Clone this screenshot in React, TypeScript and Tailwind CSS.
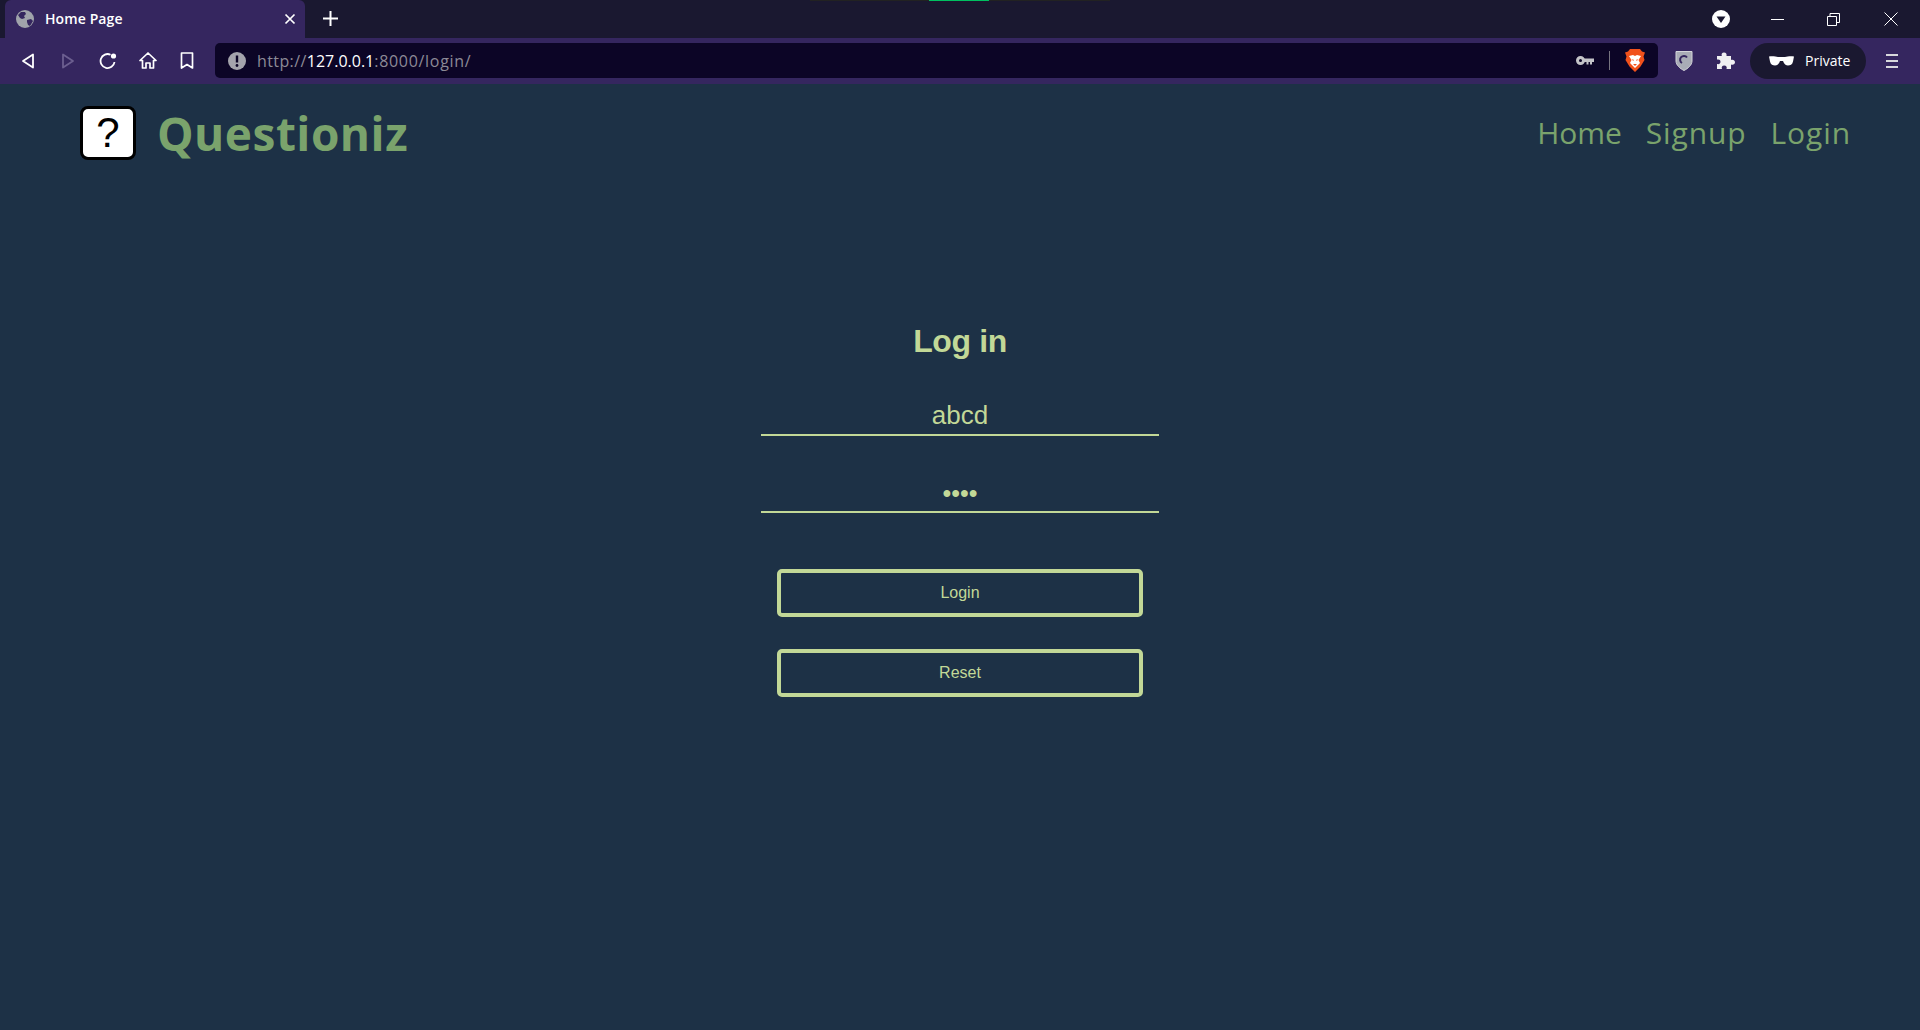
import React from 'react';

const sans = 'font-["Liberation_Sans",Arial,sans-serif]';
const ui = 'font-["Open_Sans","Noto_Sans",sans-serif]';

function TabBar() {
    return (
        <div className="relative flex h-[38px] shrink-0 items-end bg-[#1a1830] pl-[5px]">
            {/* Strip at the very top of the window */}
            <div className="absolute left-[810px] top-0 h-px w-[300px] bg-[#222222]"></div>
            <div className="absolute left-[929px] top-0 h-px w-[60px] bg-[#00c060]"></div>

            <div className="flex h-[38px] w-[300px] items-center rounded-t-[6px] bg-[#35265f] pl-[11px] pr-[8px]">
                <svg width="18" height="18" viewBox="0 0 18 18" className="shrink-0">
                    <circle cx="9" cy="9" r="9" fill="#a0a3ab" />
                    <path d="M2 5l3-3 4 0 1 2-2 2 1 2-3 1-2-1zM11 10l4-1 2 2-3 5-2-1-1-3z" fill="#35265f" />
                </svg>
                <span className={`ml-[11px] flex-1 text-[14px] font-semibold leading-none tracking-[0.1px] text-white ${ui}`}>Home Page</span>
                <svg width="12" height="12" viewBox="0 0 12 12" className="shrink-0 mr-[1px]">
                    <path d="M1.5 1.5l9 9M10.5 1.5l-9 9" stroke="#fff" strokeWidth="1.7" />
                </svg>
            </div>
            <div className="flex h-[38px] w-[50px] items-center justify-center pb-[1px]">
                <svg width="15" height="15" viewBox="0 0 15 15">
                    <path d="M7.5 0v15M0 7.5h15" stroke="#fff" strokeWidth="2" />
                </svg>
            </div>

            <div className="ml-auto flex h-[38px] items-center">
                <svg width="18" height="18" viewBox="0 0 18 18" className="mr-[41px]">
                    <circle cx="9" cy="9" r="9" fill="#fff" />
                    <path d="M4.5 6.5h9L9 13z" fill="#1a1830" />
                </svg>
                <div className="mr-[43px] h-px w-[13px] bg-white"></div>
                <svg width="13" height="13" viewBox="0 0 13 13" className="mr-[44px]">
                    <path d="M0.5 3.5h9v9h-9zM3 3.5V0.5h9.5v9h-3" fill="none" stroke="#fff" strokeWidth="1" />
                </svg>
                <svg width="14" height="14" viewBox="0 0 14 14" className="mr-[22px]">
                    <path d="M0.5 0.5l13 13M13.5 0.5l-13 13" stroke="#fff" strokeWidth="1" />
                </svg>
            </div>
        </div>
    );
}

function NavIcons() {
    return (
        <div className="flex w-[215px] shrink-0 items-center pl-[21px]">
            <svg width="14" height="16" viewBox="0 0 14 16" className="mr-[26px]">
                <path d="M12 1.5v13L2 8z" fill="none" stroke="#fff" strokeWidth="1.8" strokeLinejoin="round" />
            </svg>
            <svg width="14" height="16" viewBox="0 0 14 16" className="mr-[24px]">
                <path d="M2 1.5v13L12 8z" fill="none" stroke="#6c5f90" strokeWidth="1.8" strokeLinejoin="round" />
            </svg>
            <svg width="18" height="18" viewBox="0 0 18 18" className="mr-[22px]">
                <path d="M15.5 10A7 7 0 1 1 11.5 2.7" fill="none" stroke="#fff" strokeWidth="1.8" />
                <circle cx="14.5" cy="4" r="2.6" fill="#fff" />
            </svg>
            <svg width="18" height="17" viewBox="0 0 18 17" className="mr-[23px]">
                <path d="M1 8.5L9 1l8 7.5h-2.5V16h-3.5v-5H7v5H3.500V8.500z" fill="none" stroke="#fff" strokeWidth="1.7" strokeLinejoin="round" />
            </svg>
            <svg width="14" height="17" viewBox="0 0 14 17">
                <path d="M1.500 1h11v15L7 12.500 1.500 16z" fill="none" stroke="#fff" strokeWidth="1.7" strokeLinejoin="round" />
            </svg>
        </div>
    );
}

function AddressBar() {
    return (
        <div className="flex h-[35px] w-[1443px] shrink-0 items-center rounded-[5px] bg-[#0c0526] pl-[13px] pr-[13px]">
            <svg width="18" height="18" viewBox="0 0 18 18" className="shrink-0">
                <circle cx="9" cy="9" r="9" fill="#a4a4ac" />
                <path d="M9 3.500v7" stroke="#0c0526" strokeWidth="2.400" />
                <circle cx="9" cy="13.500" r="1.400" fill="#0c0526" />
            </svg>
            <span className={`ml-[11px] flex-1 text-[16px] leading-none tracking-[0.4px] text-[#8c8a96] ${ui}`}>
                http://<span className="text-white tracking-[0px]">127.0.0.1</span><span className="tracking-[0.7px]">:8000/login/</span>
            </span>
            <svg width="18" height="11" viewBox="0 0 18 11" className="shrink-0">
                <circle cx="4.500" cy="5.500" r="3" fill="none" stroke="#c4c4c8" strokeWidth="3" />
                <path d="M8 3.500h10v3.500h-2v2.500h-2V7h-1.500v2.500h-2V7H8z" fill="#c4c4c8" />
            </svg>
            <div className="ml-[15px] h-[19px] w-px bg-[#77747f]"></div>
            <svg width="20" height="23" viewBox="0 0 20 23" className="ml-[15px] shrink-0">
                <path d="M5 0h10l2 2.500 3 1-1.500 4 1 3.500-4 6.500-5.500 5.500-5.500-5.500-4-6.500 1-3.500L0 3.500l3-1z" fill="#f1511b" />
                <path d="M4 7l4-1 2 1 2-1 4 1-2.500 4 1.500 3-5 5-5-5 1.500-3z" fill="#fff" />
                <path d="M7 10l2 1-1 1zM13 10l-2 1 1 1zM8 15h4l-2 2z" fill="#f1511b" />
            </svg>
        </div>
    );
}

function ToolbarRight() {
    return (
        <div className="flex flex-1 items-center pl-[17px]">
            <svg width="18" height="21" viewBox="0 0 18 21" className="shrink-0">
                <path d="M1 1.500h16V11c0 4-4 7.500-8 9.500C5 18.500 1 15 1 11z" fill="#a9acb6" stroke="#d4d5da" strokeWidth="1" />
                <path d="M12 7.500A3.800 3.800 0 1 0 7 13" fill="none" stroke="#35265f" strokeWidth="2" />
            </svg>
            <svg width="18" height="18" viewBox="0 0 18 18" className="ml-[24px] shrink-0">
                <path d="M7 0.500c2 0 3 1.500 2.500 3.500H14v4c2-.8 4 .3 4 2.300s-2 3-4 2.200V17H9.500c.8-2-.3-3.500-2.300-3.500S4.200 15 5 17H0v-5c2 .6 3.500-.5 3.500-2.300S2 7 0 7.600V4h4.800C4.200 2 5 .5 7 .5z" fill="#f0f0f2" />
            </svg>
            <div className="ml-[15px] flex h-[36px] w-[116px] shrink-0 items-center rounded-full bg-[#1a1830] pl-[19px]">
                <svg width="25" height="10" viewBox="0 0 25 10" className="shrink-0">
                    <path d="M0 0.500c4-.6 7 .2 9 .5h7c2-.3 5-1.100 9-.5l-1 5c-.5 3-3 4-5 4s-4-1.500-5-4.500h-3c-1 3-3 4.500-5 4.500s-4.500-1-5-4z" fill="#fff" />
                </svg>
                <span className={`ml-[11px] text-[14px] leading-none text-white ${ui}`}>Private</span>
            </div>
            <div className="ml-[20px] flex w-[12px] shrink-0 flex-col gap-[4px]">
                <div className="h-[2px] bg-[#d8d8dc]"></div>
                <div className="h-[2px] bg-[#d8d8dc]"></div>
                <div className="h-[2px] bg-[#d8d8dc]"></div>
            </div>
        </div>
    );
}

function Header() {
    return (
        <header className="flex items-center justify-between pl-[80px] pr-[69px] pt-[22px]">
            <div className="flex items-center">
                <div className={`flex h-[54px] w-[56px] items-center justify-center rounded-[8px] border-[3px] border-black bg-white text-[42px] leading-none text-black ${sans}`}>?</div>
                <span className={`ml-[21px] text-[46px] font-bold leading-none tracking-[0.5px] text-[#7aa36c] ${ui}`}>Questioniz</span>
            </div>
            <nav className={`flex gap-[24px] text-[30px] font-medium leading-none tracking-[0.9px] text-[#7aa36c] ${ui}`}>
                <a className="tracking-[-0.1px]">Home</a>
                <a>Signup</a>
                <a>Login</a>
            </nav>
        </header>
    );
}

function LoginForm() {
    return (
        <form className={`mx-auto mt-[165px] flex w-[398px] flex-col items-center text-[#c2d897] ${sans}`}>
            <h1 className="text-[32px] font-bold leading-none tracking-[-0.4px]">Log in</h1>
            <input
                defaultValue="abcd"
                className="mt-[43px] h-[36px] w-full border-b-2 border-[#c2d897] bg-transparent pb-[3px] text-center text-[26px] leading-none outline-none"
            />
            <input
                type="password"
                defaultValue="abcd"
                className="mt-[41px] h-[36px] w-full border-b-2 border-[#c2d897] bg-transparent pb-[2px] text-center text-[25px] leading-none outline-none"
            />
            <button type="button" className="mt-[56px] h-[48px] w-[366px] rounded-[5px] border-[4px] border-[#c2d897] text-[16px]">Login</button>
            <button type="reset" className="mt-[32px] h-[48px] w-[366px] rounded-[5px] border-[4px] border-[#c2d897] text-[16px]">Reset</button>
        </form>
    );
}

export default function App() {
    return (
        <div className="flex h-[1030px] w-[1920px] flex-col overflow-hidden bg-[#1d3146]">
            <TabBar />
            <div className="flex h-[46px] shrink-0 items-center bg-[#35265f] pb-[1px]">
                <NavIcons />
                <AddressBar />
                <ToolbarRight />
            </div>
            <Header />
            <LoginForm />
        </div>
    );
}
